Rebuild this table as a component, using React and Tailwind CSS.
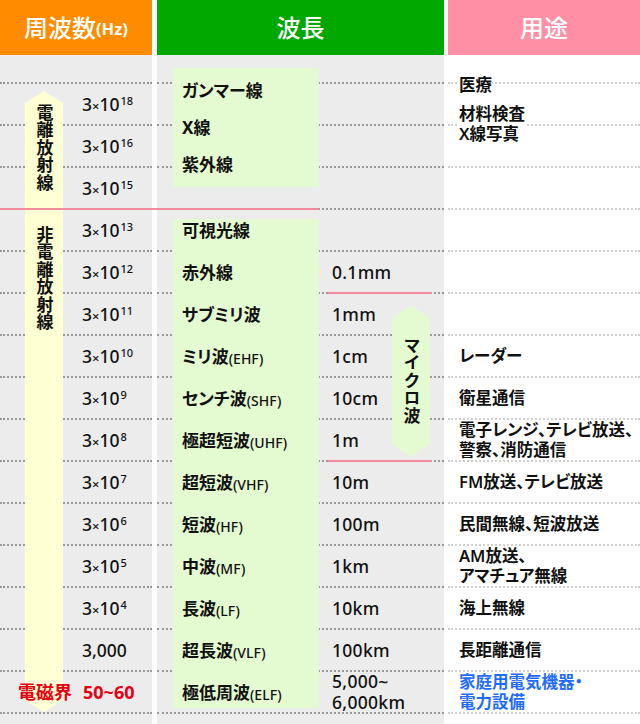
import React from "react";

const rows = [
  { exp: "18" },
  { exp: "16" },
  { exp: "15" },
  { exp: "13" },
  { exp: "12", value: "0.1mm" },
  { exp: "11", value: "1mm" },
  { exp: "10", value: "1cm", use: "レーダー" },
  { exp: "9", value: "10cm", use: "衛星通信" },
  { exp: "8", value: "1m", use: ["電子レンジ、テレビ放送、", "警察、消防通信"] },
  { exp: "7", value: "10m", use: "FM放送、テレビ放送" },
  { exp: "6", value: "100m", use: "民間無線、短波放送" },
  { exp: "5", value: "1km", use: ["AM放送、", "アマチュア無線"] },
  { exp: "4", value: "10km", use: "海上無線" },
  { plain: "3,000", value: "100km", use: "長距離通信" },
];

const bandNames = [
  ["可視光線"],
  ["赤外線"],
  ["サブミリ波"],
  ["ミリ波", "(EHF)"],
  ["センチ波", "(SHF)"],
  ["極超短波", "(UHF)"],
  ["超短波", "(VHF)"],
  ["短波", "(HF)"],
  ["中波", "(MF)"],
  ["長波", "(LF)"],
  ["超長波", "(VLF)"],
  ["極低周波", "(ELF)"],
];

function Freq({ exp, plain }) {
  if (plain) return <span>{plain}</span>;
  return (
    <span>
      3<span className="text-[13px]">×</span>10
      <sup className="ml-[1px] text-[11px]">{exp}</sup>
    </span>
  );
}

function Lines({ text }) {
  if (!text) return null;
  if (Array.isArray(text)) {
    return (
      <div className="flex flex-col">
        {text.map((t) => (
          <span key={t}>{t}</span>
        ))}
      </div>
    );
  }
  return <span>{text}</span>;
}

function Row({ left, value, use, blue }) {
  return (
    <div className="flex h-[42px]">
      <div className="w-[152px] bg-[#ececec] border-t-2 border-dotted border-[#999] flex items-center text-[17.5px] font-medium text-[#111]">
        {left}
      </div>
      <div className="w-[5px]" />
      <div className="w-[287px] bg-[#ececec] border-t-2 border-dotted border-[#999] flex items-center pl-[175px] text-[17.5px] font-medium text-[#111] leading-[21px] tracking-[0.3px]">
        <Lines text={value} />
      </div>
      <div className="w-[4px]" />
      <div
        className={
          "flex-1 border-t-2 border-dotted border-[#d0d0d0] flex items-center pl-[11px] text-[16.5px] font-semibold leading-[20px] " +
          (blue ? "text-[#1f6bff]" : "text-[#111]")
        }
      >
        <Lines text={use} />
      </div>
    </div>
  );
}

export default function App() {
  return (
    <div className="relative w-[640px] h-[724px] overflow-hidden bg-white text-[#111] font-['Noto_Sans','Noto_Sans_CJK_JP',sans-serif] [font-feature-settings:'palt']">
      {/* header */}
      <div className="flex h-[55px] text-white">
        <div className="w-[152px] bg-[#ff8c00] flex items-center justify-center">
          <span className="text-[24px] font-medium">周波数</span>
          <span className="text-[16.5px] font-bold mt-[3px]">(Hz)</span>
        </div>
        <div className="w-[5px]" />
        <div className="w-[287px] bg-[#00a800] flex items-center justify-center text-[24px] font-medium">
          波長
        </div>
        <div className="w-[4px]" />
        <div className="flex-1 bg-[#ff8fa5] flex items-center justify-center text-[24px] font-medium">
          用途
        </div>
      </div>

      <div className="flex h-[27px]">
        <div className="w-[152px] bg-[#ececec]" />
        <div className="w-[5px]" />
        <div className="w-[287px] bg-[#ececec]" />
        <div className="w-[4px]" />
        <div className="flex-1" />
      </div>

      {rows.map((r, i) => (
        <Row
          key={i}
          left={
            <span className="pl-[82px]">
              <Freq exp={r.exp} plain={r.plain} />
            </span>
          }
          value={r.value}
          use={r.use}
        />
      ))}

      <Row
        left={
          <div className="flex items-center pl-[18px] text-[18px] font-bold text-[#e60012]">
            <span className="relative z-10 w-[65px]">電磁界</span>
            <span>50~60</span>
          </div>
        }
        value={["5,000~", "6,000km"]}
        use={["家庭用電気機器・", "電力設備"]}
        blue
      />

      <div className="flex h-[12px]">
        <div className="w-[152px] bg-[#ececec] border-t-2 border-dotted border-[#999]" />
        <div className="w-[5px]" />
        <div className="w-[287px] bg-[#ececec] border-t-2 border-dotted border-[#999]" />
        <div className="w-[4px]" />
        <div className="flex-1 border-t-2 border-dotted border-[#d0d0d0]" />
      </div>

      {/* ionizing / non-ionizing arrow */}
      <div className="absolute left-[25px] top-[91px] w-[38px] h-[621px] bg-[#ffffd4] flex flex-col items-center pt-[13px] [clip-path:polygon(50%_0,100%_12px,100%_calc(100%_-_12px),50%_100%,0_calc(100%_-_12px),0_12px)]">
        <span className="[writing-mode:vertical-rl] text-[17px] font-bold leading-none tracking-[0.5px]">
          電離放射線
        </span>
        <span className="mt-[34px] [writing-mode:vertical-rl] text-[17px] font-bold leading-none tracking-[0.5px]">
          非電離放射線
        </span>
      </div>

      {/* wave names */}
      <div className="absolute left-[173px] top-[68px] w-[146px] h-[119px] bg-[#e4fad0] pt-[4px] pl-[9px] flex flex-col">
        {["ガンマー線", "X線", "紫外線"].map((n) => (
          <div key={n} className="h-[37px] flex items-center text-[17px] font-bold">
            {n}
          </div>
        ))}
      </div>
      <div className="absolute left-[173px] top-[219px] w-[146px] h-[489px] bg-[#e4fad0] pl-[9px]">
        <div className="-mt-[9px] flex flex-col">
          {bandNames.map(([n, sub]) => (
            <div key={n} className="h-[42px] flex items-center">
              <span className="text-[17px] font-bold">{n}</span>
              {sub && <span className="text-[14px] font-medium mt-[2px]">{sub}</span>}
            </div>
          ))}
        </div>
      </div>

      {/* boundary lines */}
      <div className="absolute left-0 top-[208px] w-[319px] h-[2px] bg-[#f08a9c]" />
      <div className="absolute left-[328px] top-[292px] w-[104px] h-[2px] bg-[#f08a9c]" />
      <div className="absolute left-[328px] top-[460px] w-[104px] h-[2px] bg-[#f08a9c]" />

      {/* microwave arrow */}
      <div className="absolute left-[392px] top-[305px] w-[38px] h-[152px] bg-[#e4fad0] flex items-center justify-center [clip-path:polygon(50%_0,100%_13px,100%_calc(100%_-_13px),50%_100%,0_calc(100%_-_13px),0_13px)]">
        <span className="[writing-mode:vertical-rl] text-[17px] font-bold leading-none tracking-[0.5px]">
          マイクロ波
        </span>
      </div>

      {/* top uses */}
      <div className="absolute left-[459px] top-[75px] flex flex-col items-start gap-[9px] text-[16.5px] font-semibold leading-[20px]">
        <span className="bg-white">医療</span>
        <span className="bg-white">
          材料検査
          <br />
          X線写真
        </span>
      </div>
    </div>
  );
}
